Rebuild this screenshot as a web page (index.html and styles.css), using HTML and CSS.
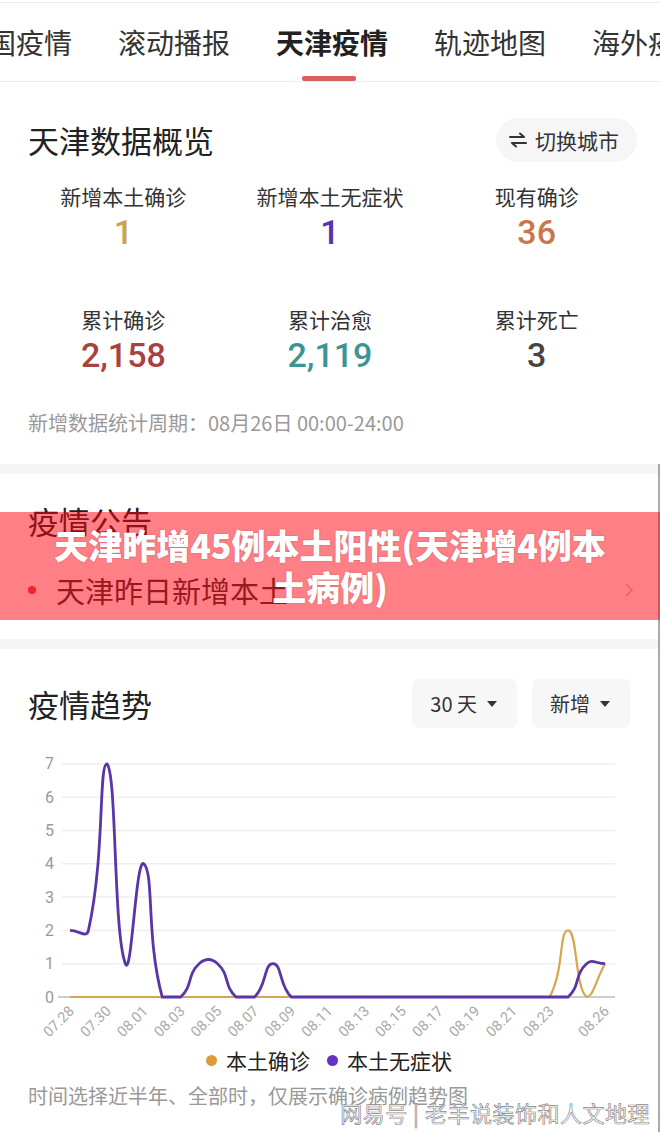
FILE: index.html
```html
<!DOCTYPE html>
<html lang="zh-CN">
<head>
    <meta charset="UTF-8">
    <meta name="viewport" content="width=device-width, initial-scale=1.0">
    <title>天津疫情</title>
    <link rel="stylesheet" href="styles.css">
</head>
<body>
    <nav class="tabs">
        <div class="tab-row">
            <span class="tab">全国疫情</span>
            <span class="tab">滚动播报</span>
            <span class="tab active">天津疫情</span>
            <span class="tab">轨迹地图</span>
            <span class="tab">海外疫情</span>
        </div>
    </nav>

    <section class="card overview">
        <div class="card-head">
            <h2>天津数据概览</h2>
            <button class="switch-btn">
                <svg width="18" height="16" viewBox="0 0 18 16">
                    <path d="M1 5H15M11 1.5L15 5" fill="none" stroke="#333" stroke-width="2" stroke-linecap="round" stroke-linejoin="round"/>
                    <path d="M17 11H3M7 14.5L3 11" fill="none" stroke="#333" stroke-width="2" stroke-linecap="round" stroke-linejoin="round"/>
                </svg>
                切换城市
            </button>
        </div>
        <div class="stats">
            <div class="stat">
                <div class="stat-label">新增本土确诊</div>
                <div class="stat-num gold">1</div>
            </div>
            <div class="stat">
                <div class="stat-label">新增本土无症状</div>
                <div class="stat-num purple">1</div>
            </div>
            <div class="stat">
                <div class="stat-label">现有确诊</div>
                <div class="stat-num orange">36</div>
            </div>
            <div class="stat">
                <div class="stat-label">累计确诊</div>
                <div class="stat-num red">2,158</div>
            </div>
            <div class="stat">
                <div class="stat-label">累计治愈</div>
                <div class="stat-num teal">2,119</div>
            </div>
            <div class="stat">
                <div class="stat-label">累计死亡</div>
                <div class="stat-num dark">3</div>
            </div>
        </div>
        <p class="note">新增数据统计周期：08月26日 00:00-24:00</p>
    </section>

    <div class="lower">
        <div class="gap"></div>
        <section class="card notice">
            <h2>疫情公告</h2>
            <div class="notice-item">
                <span class="dot"></span>
                <span class="notice-text">天津昨日新增本土</span>
                <svg class="chevron" width="10" height="16" viewBox="0 0 10 16">
                    <path d="M2 2L8 8L2 14" fill="none" stroke="#c8c8c8" stroke-width="1.6"/>
                </svg>
            </div>
        </section>
        <div class="gap"></div>
        <section class="card trend">
            <div class="card-head">
                <h2>疫情趋势</h2>
                <div class="selects">
                    <div class="select">30 天<span class="caret"></span></div>
                    <div class="select">新增<span class="caret"></span></div>
                </div>
            </div>
            <svg id="trend-chart" class="chart" width="660" height="300" viewBox="0 0 660 300"></svg>
            <div class="legend">
                <span class="legend-dot gold-dot"></span>本土确诊
                <span class="legend-dot purple-dot"></span>本土无症状
            </div>
            <p class="note">时间选择近半年、全部时，仅展示确诊病例趋势图</p>
        </section>
    </div>

    <div class="banner">
        <h1>天津昨增45例本土阳性(天津增4例本<br>土病例)</h1>
    </div>
    <div class="watermark">网易号 | 老羊说装饰和人文地理</div>

    <script>
        const NS = 'http://www.w3.org/2000/svg';
        const chart = document.getElementById('trend-chart');
        const left = 70, right = 605, base = 252, unit = 33.3;
        const step = (right - left) / 29;

        const confirmed = new Array(30).fill(0);
        confirmed[27] = 2; confirmed[29] = 1;
        const asymptomatic = new Array(30).fill(0);
        [2, 2, 7, 1, 4, 0, 0, 1, 1, 0, 0, 1].forEach((v, i) => asymptomatic[i] = v);
        asymptomatic[28] = 1; asymptomatic[29] = 1;

        const labels = ['07.28', '07.30', '08.01', '08.03', '08.05', '08.07', '08.09', '08.11',
                        '08.13', '08.15', '08.17', '08.19', '08.21', '08.23', '08.26'];
        const labelIndex = [0, 2, 4, 6, 8, 10, 12, 14, 16, 18, 20, 22, 24, 26, 29];

        function add(tag, attrs, text) {
            const el = document.createElementNS(NS, tag);
            for (const k in attrs) el.setAttribute(k, attrs[k]);
            if (text !== undefined) el.textContent = text;
            chart.appendChild(el);
            return el;
        }

        // grid lines and y axis
        for (let v = 1; v <= 7; v++) {
            const y = base - v * unit;
            add('line', { x1: 62, x2: 615, y1: y, y2: y, class: 'grid' });
        }
        add('line', { x1: 58, x2: 615, y1: base, y2: base, class: 'axis' });
        for (let v = 0; v <= 7; v++) {
            add('text', { x: 54, y: base - v * unit, class: 'y-label' }, v);
        }

        // x labels
        labels.forEach((text, i) => {
            const x = left + labelIndex[i] * step + 5;
            add('text', { x: x, y: 267, class: 'x-label', transform: `rotate(-45 ${x} 267)` }, text);
        });

        // smoothed line, control points kept inside the data's y range
        function curve(values) {
            const pts = values.map((v, i) => [left + i * step, base - v * unit]);
            const ys = pts.map(p => p[1]);
            const minY = Math.min(...ys), maxY = Math.max(...ys);
            const clamp = y => Math.max(minY, Math.min(maxY, y));
            const smooth = 0.5;
            const cps = pts.map((p, i) => {
                const prev = pts[i - 1] || p, next = pts[i + 1] || p;
                const vx = next[0] - prev[0], vy = next[1] - prev[1];
                const d0 = Math.hypot(p[0] - prev[0], p[1] - prev[1]);
                const d1 = Math.hypot(next[0] - p[0], next[1] - p[1]);
                const sum = d0 + d1 || 1;
                return {
                    before: [p[0] - vx * smooth * d0 / sum, clamp(p[1] - vy * smooth * d0 / sum)],
                    after: [p[0] + vx * smooth * d1 / sum, clamp(p[1] + vy * smooth * d1 / sum)]
                };
            });
            let d = `M${pts[0][0]},${pts[0][1]}`;
            for (let i = 0; i < pts.length - 1; i++) {
                const a = cps[i].after, b = cps[i + 1].before, e = pts[i + 1];
                d += ` C${a[0]},${a[1]} ${b[0]},${b[1]} ${e[0]},${e[1]}`;
            }
            return d;
        }

        add('path', { d: curve(confirmed), class: 'line-gold' });
        add('path', { d: curve(asymptomatic), class: 'line-purple' });
    </script>
</body>
</html>
```

FILE: styles.css
```css
body {
    margin: 0;
    width: 660px;
    overflow: hidden;
    position: relative;
    background: #fff;
    font-family: "Noto Sans CJK SC", "Noto Sans", sans-serif;
    color: #333;
}
h1, h2, p {
    margin: 0;
}

/* tabs */
.tabs {
    margin-top: 2px;
    border-top: 1px solid #eee;
    border-bottom: 1px solid #eee;
    overflow: hidden;
}
.tab-row {
    display: flex;
    gap: 46px;
    margin-left: -40px;
    height: 78px;
    align-items: center;
}
.tab {
    position: relative;
    flex: none;
    font-size: 28px;
    line-height: 78px;
    color: #333;
    white-space: nowrap;
}
.tab.active {
    font-weight: 700;
    color: #222;
}
.tab.active::after {
    content: "";
    position: absolute;
    left: 50%;
    bottom: 0;
    width: 54px;
    height: 5px;
    margin-left: -30px;
    border-radius: 2px;
    background: #d9605f;
}

/* cards */
.card {
    background: #fff;
    padding: 0 28px;
}
.gap {
    height: 10px;
    background: #f5f5f5;
}
.lower {
    border-right: 2px solid #aaa;
}
.card-head {
    display: flex;
    justify-content: space-between;
    align-items: center;
}
.card h2 {
    font-size: 31px;
    font-weight: 400;
    line-height: 44px;
    color: #222;
}
.note {
    font-size: 20px;
    line-height: 28px;
    color: #999;
}

/* overview */
.overview {
    padding-top: 36px;
    padding-bottom: 27px;
}
.switch-btn {
    display: flex;
    align-items: center;
    gap: 8px;
    height: 44px;
    margin-right: -5px;
    padding: 0 18px 0 13px;
    border: none;
    border-radius: 22px;
    background: #f6f6f6;
    font-family: inherit;
    font-size: 21px;
    color: #333;
}
.stats {
    display: grid;
    grid-template-columns: repeat(3, 1fr);
    row-gap: 51px;
    margin: 19px -8px 0;
}
.stat {
    text-align: center;
}
.stat-label {
    font-size: 21px;
    line-height: 30px;
    color: #333;
}
.stat-num {
    font-family: Roboto, "Noto Sans", sans-serif;
    font-weight: 500;
    font-size: 34px;
    line-height: 42px;
}
.gold { color: #c9a552; }
.purple { color: #5733b3; }
.orange { color: #c8774c; }
.red { color: #a8413f; }
.teal { color: #3d9494; }
.dark { color: #444; }
.overview .note {
    margin-top: 33px;
}

/* notice */
.notice {
    padding-top: 25px;
    padding-bottom: 29px;
}
.notice-item {
    display: flex;
    align-items: center;
    margin-top: 27px;
    height: 40px;
}
.dot {
    width: 8px;
    height: 8px;
    border-radius: 50%;
    background: #e4474d;
}
.notice-text {
    flex: 1;
    margin-left: 20px;
    font-size: 29px;
    color: #333;
}
.chevron {
    margin-right: -4px;
}

/* trend */
.trend {
    padding-top: 30px;
    padding-bottom: 22px;
}
.selects {
    display: flex;
    gap: 15px;
}
.select {
    display: flex;
    align-items: center;
    gap: 10px;
    height: 49px;
    padding: 0 20px 0 18px;
    border-radius: 6px;
    background: #f7f7f7;
    font-size: 20px;
    color: #333;
}
.caret {
    width: 0;
    height: 0;
    border-left: 5px solid transparent;
    border-right: 5px solid transparent;
    border-top: 6px solid #333;
}
.chart {
    display: block;
    margin: 17px -28px 0;
}
.grid {
    stroke: #eee;
    stroke-width: 1.5;
}
.axis {
    stroke: #999;
    stroke-width: 1;
}
.y-label {
    font-family: Roboto, sans-serif;
    font-size: 16px;
    fill: #999;
    text-anchor: end;
    dominant-baseline: central;
}
.x-label {
    font-family: Roboto, sans-serif;
    font-size: 14.5px;
    fill: #aaa;
    text-anchor: end;
}
.line-gold {
    fill: none;
    stroke: #d6a64f;
    stroke-width: 2.2;
}
.line-purple {
    fill: none;
    stroke: #5a35a8;
    stroke-width: 2.8;
}
.legend {
    display: flex;
    justify-content: center;
    align-items: center;
    margin-top: 0;
    font-size: 21px;
    line-height: 30px;
    color: #222;
}
.legend-dot {
    width: 11px;
    height: 11px;
    border-radius: 50%;
    margin-right: 9px;
}
.purple-dot {
    margin-left: 17px;
    background: #6530c6;
}
.gold-dot {
    background: #dc9c3c;
}
.trend .note {
    margin-top: 7px;
}

/* overlays */
.banner {
    position: absolute;
    left: 0;
    top: 512px;
    width: 660px;
    height: 108px;
    background: rgba(255, 0, 13, 0.5);
    display: flex;
    align-items: center;
    justify-content: center;
}
.banner h1 {
    font-size: 34px;
    font-weight: 900;
    line-height: 42px;
    text-align: center;
    color: #fff;
    text-shadow: 0 0 2px rgba(0, 0, 0, 0.25);
}
.watermark {
    position: absolute;
    right: 10px;
    top: 1097px;
    font-size: 22px;
    line-height: 30px;
    color: #fff;
    -webkit-text-stroke: 0.7px #8a8a8a;
    letter-spacing: 0.5px;
}
```
